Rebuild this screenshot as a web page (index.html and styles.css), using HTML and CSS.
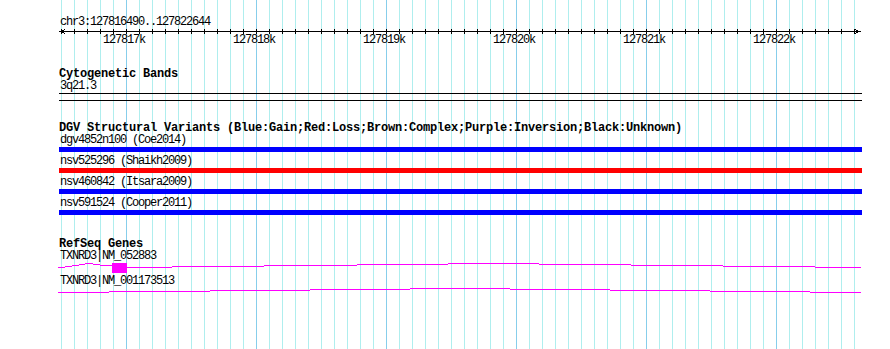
FILE: index.html
```html
<!DOCTYPE html>
<html>
<head>
<meta charset="utf-8">
<link rel="stylesheet" href="styles.css">
</head>
<body>
<div class="view">
  <svg class="grid" width="890" height="349" aria-hidden="true">
    <defs>
      <pattern id="minor" x="61" y="0" width="13" height="349" patternUnits="userSpaceOnUse">
        <rect x="0" y="0" width="1" height="349" class="minor-line"/>
      </pattern>
    </defs>
    <rect x="61" y="0" width="794" height="349" fill="url(#minor)"/>
    <rect x="126" y="0" width="1" height="349" class="major-line"/>
    <rect x="256" y="0" width="1" height="349" class="major-line"/>
    <rect x="386" y="0" width="1" height="349" class="major-line"/>
    <rect x="516" y="0" width="1" height="349" class="major-line"/>
    <rect x="646" y="0" width="1" height="349" class="major-line"/>
    <rect x="776" y="0" width="1" height="349" class="major-line"/>
  </svg>

  <div class="tracks">
    <section class="ruler">
      <div class="ruler-label">chr3:127816490..127822644</div>
      <svg class="axis" width="803" height="5" aria-hidden="true">
        <rect x="1" y="2" width="800" height="1"/>
        <path class="arrow" d="M6.5 0.5 L1.5 2.5 L6.5 4.5"/>
        <path class="arrow" d="M795.5 0.5 L800.5 2.5 L795.5 4.5"/>
        <g class="ticks">
          <rect x="2" y="0" width="1" height="5"/><rect x="15" y="0" width="1" height="5"/><rect x="28" y="0" width="1" height="5"/><rect x="41" y="0" width="1" height="5"/><rect x="54" y="0" width="1" height="5"/><rect x="67" y="0" width="1" height="5"/><rect x="80" y="0" width="1" height="5"/><rect x="93" y="0" width="1" height="5"/><rect x="106" y="0" width="1" height="5"/><rect x="119" y="0" width="1" height="5"/>
          <rect x="132" y="0" width="1" height="5"/><rect x="145" y="0" width="1" height="5"/><rect x="158" y="0" width="1" height="5"/><rect x="171" y="0" width="1" height="5"/><rect x="184" y="0" width="1" height="5"/><rect x="197" y="0" width="1" height="5"/><rect x="210" y="0" width="1" height="5"/><rect x="223" y="0" width="1" height="5"/><rect x="236" y="0" width="1" height="5"/><rect x="249" y="0" width="1" height="5"/>
          <rect x="262" y="0" width="1" height="5"/><rect x="275" y="0" width="1" height="5"/><rect x="288" y="0" width="1" height="5"/><rect x="301" y="0" width="1" height="5"/><rect x="314" y="0" width="1" height="5"/><rect x="327" y="0" width="1" height="5"/><rect x="340" y="0" width="1" height="5"/><rect x="353" y="0" width="1" height="5"/><rect x="366" y="0" width="1" height="5"/><rect x="379" y="0" width="1" height="5"/>
          <rect x="392" y="0" width="1" height="5"/><rect x="405" y="0" width="1" height="5"/><rect x="418" y="0" width="1" height="5"/><rect x="431" y="0" width="1" height="5"/><rect x="444" y="0" width="1" height="5"/><rect x="457" y="0" width="1" height="5"/><rect x="470" y="0" width="1" height="5"/><rect x="483" y="0" width="1" height="5"/><rect x="496" y="0" width="1" height="5"/><rect x="509" y="0" width="1" height="5"/>
          <rect x="522" y="0" width="1" height="5"/><rect x="535" y="0" width="1" height="5"/><rect x="548" y="0" width="1" height="5"/><rect x="561" y="0" width="1" height="5"/><rect x="574" y="0" width="1" height="5"/><rect x="587" y="0" width="1" height="5"/><rect x="600" y="0" width="1" height="5"/><rect x="613" y="0" width="1" height="5"/><rect x="626" y="0" width="1" height="5"/><rect x="639" y="0" width="1" height="5"/>
          <rect x="652" y="0" width="1" height="5"/><rect x="665" y="0" width="1" height="5"/><rect x="678" y="0" width="1" height="5"/><rect x="691" y="0" width="1" height="5"/><rect x="704" y="0" width="1" height="5"/><rect x="717" y="0" width="1" height="5"/><rect x="730" y="0" width="1" height="5"/><rect x="743" y="0" width="1" height="5"/><rect x="756" y="0" width="1" height="5"/><rect x="769" y="0" width="1" height="5"/>
          <rect x="782" y="0" width="1" height="5"/><rect x="795" y="0" width="1" height="5"/>
        </g>
      </svg>
      <div class="tick-labels">
        <span style="left:44px">127817k</span>
        <span style="left:174px">127818k</span>
        <span style="left:304px">127819k</span>
        <span style="left:434px">127820k</span>
        <span style="left:564px">127821k</span>
        <span style="left:694px">127822k</span>
      </div>
    </section>

    <section class="track cyto">
      <div class="track-title">Cytogenetic Bands</div>
      <div class="feat-label">3q21.3</div>
      <div class="band"></div>
    </section>

    <section class="track dgv">
      <div class="track-title">DGV Structural Variants (Blue:Gain;Red:Loss;Brown:Complex;Purple:Inversion;Black:Unknown)</div>
      <div class="variant">
        <div class="feat-label">dgv4852n100 (Coe2014)</div>
        <div class="bar gain"></div>
      </div>
      <div class="variant">
        <div class="feat-label">nsv525296 (Shaikh2009)</div>
        <div class="bar loss"></div>
      </div>
      <div class="variant">
        <div class="feat-label">nsv460842 (Itsara2009)</div>
        <div class="bar gain"></div>
      </div>
      <div class="variant">
        <div class="feat-label">nsv591524 (Cooper2011)</div>
        <div class="bar gain"></div>
      </div>
    </section>

    <section class="track genes">
      <div class="track-title">RefSeq Genes</div>
      <div class="gene">
        <div class="feat-label">TXNRD3|NM_052883</div>
        <svg class="gene-glyph gene-tall" width="804" height="10" aria-hidden="true">
          <rect x="0" y="4" width="7" height="1"/>
          <rect x="7" y="3" width="7" height="1"/>
          <rect x="14" y="2" width="7" height="1"/>
          <rect x="21" y="1" width="6" height="1"/>
          <rect x="27" y="0" width="8" height="1"/>
          <rect x="35" y="1" width="7" height="1"/>
          <rect x="42" y="2" width="12" height="1"/>
          <rect x="54" y="0" width="15" height="10"/>
          <rect x="69" y="4" width="45" height="1"/>
          <rect x="114" y="3" width="92" height="1"/>
          <rect x="206" y="2" width="93" height="1"/>
          <rect x="299" y="1" width="91" height="1"/>
          <rect x="390" y="0" width="91" height="1"/>
          <rect x="481" y="1" width="92" height="1"/>
          <rect x="573" y="2" width="92" height="1"/>
          <rect x="665" y="3" width="92" height="1"/>
          <rect x="757" y="4" width="46" height="1"/>
        </svg>
      </div>
      <div class="gene">
        <div class="feat-label">TXNRD3|NM_001173513</div>
        <svg class="gene-glyph" width="804" height="5" aria-hidden="true">
          <rect x="0" y="4" width="51" height="1"/>
          <rect x="51" y="3" width="101" height="1"/>
          <rect x="152" y="2" width="100" height="1"/>
          <rect x="252" y="1" width="100" height="1"/>
          <rect x="352" y="0" width="100" height="1"/>
          <rect x="452" y="1" width="100" height="1"/>
          <rect x="552" y="2" width="100" height="1"/>
          <rect x="652" y="3" width="100" height="1"/>
          <rect x="752" y="4" width="51" height="1"/>
        </svg>
      </div>
    </section>
  </div>
</div>
</body>
</html>
```

FILE: styles.css
```css
html, body {
  margin: 0;
  padding: 0;
  background: #ffffff;
}

.view {
  position: relative;
  width: 890px;
  height: 349px;
  overflow: hidden;
  background: #ffffff;
  color: #000000;
  font-family: "Liberation Mono", "DejaVu Sans Mono", monospace;
}

.grid {
  position: absolute;
  left: 0;
  top: 0;
  shape-rendering: crispEdges;
}

.minor-line {
  fill: #afeeee;
}

.major-line {
  fill: #87ceeb;
}

.tracks {
  position: relative;
  margin-left: 59px;
  width: 803px;
}

.ruler-label,
.feat-label,
.tick-labels {
  font-size: 12px;
  line-height: 13px;
  letter-spacing: -1.2px;
  white-space: nowrap;
}

.ruler-label {
  padding-top: 16px;
  padding-left: 1px;
}

.axis {
  display: block;
  shape-rendering: crispEdges;
  fill: #000000;
}

.axis .arrow {
  fill: none;
  stroke: #000000;
  stroke-width: 1;
}

.tick-labels {
  position: relative;
  height: 13px;
}

.tick-labels span {
  position: absolute;
  top: 0;
}

.track-title {
  font-size: 12px;
  line-height: 12px;
  font-weight: bold;
  letter-spacing: -0.2px;
  white-space: nowrap;
  margin-top: 21px;
}

.genes .track-title {
  margin-top: 23px;
}

.feat-label {
  padding-left: 1px;
}

.band {
  height: 6px;
  border-top: 1px solid #000000;
  border-bottom: 1px solid #000000;
}

.variant + .variant {
  margin-top: 3px;
}

.bar {
  height: 5px;
}

.gain {
  background: #0000ff;
}

.loss {
  background: #ff0000;
}

.gene + .gene {
  margin-top: 2px;
}

.gene-glyph {
  display: block;
  margin-left: -1px;
  fill: #ff00ff;
  shape-rendering: crispEdges;
}
```
